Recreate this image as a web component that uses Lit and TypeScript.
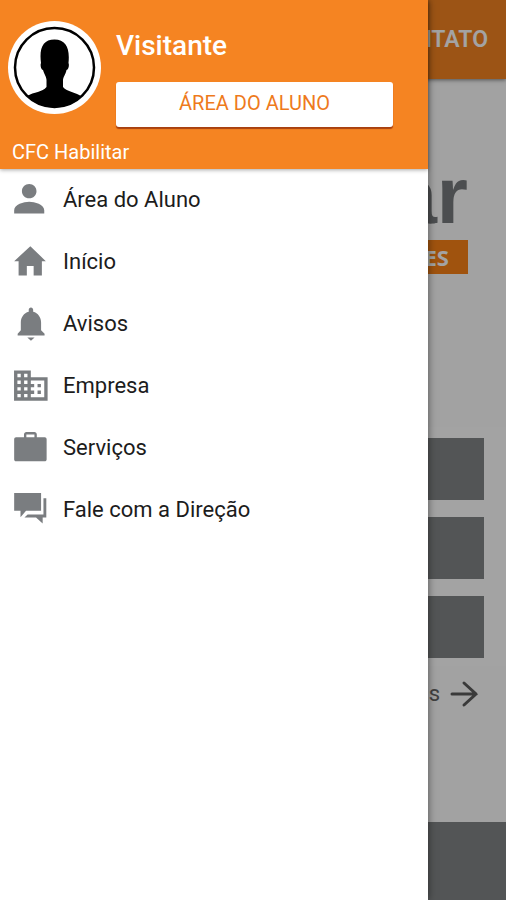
import { LitElement, html, css, svg } from "lit";
import { customElement } from "lit/decorators.js";

const ICONS = {
  person: svg`<path d="M11.500 10.900c2.600 0 4.600-2 4.600-4.500s-2-4.500-4.600-4.500-4.600 2-4.600 4.500 2 4.500 4.600 4.500zm0 2.200c-3.400 0-9.500 1.700-9.500 5.400v2h19v-2c0-3.700-6.100-5.400-9.500-5.400z"/>`,
  home: svg`<path d="M10 20.500v-6h4.300v6h5.200v-9H22L12.200 2 2 11.500h2.800v9z"/>`,
  bell: svg`<path d="M10.300 20.500h4.600l-2.300 2zM19 16v-5c0-3.070-1.900-6-5-6.700V3c0-.83-.6-1.500-1.400-1.500s-1.400.67-1.400 1.500v1.300c-3.100.7-5 3.600-5 6.700v5l-2 2.200v1.100h17v-1.100z"/>`,
  company: svg`<path transform="translate(-.2 -1) scale(1.060)" d="M12 7V3H2v18h20V7H12zM6 19H4v-2h2v2zm0-4H4v-2h2v2zm0-4H4V9h2v2zm0-4H4V5h2v2zm4 12H8v-2h2v2zm0-4H8v-2h2v2zm0-4H8V9h2v2zm0-4H8V5h2v2zm10 12h-8v-2h2v-2h-2v-2h2v-2h-2V9h8v10zm-2-8h-2v2h2v-2zm0 4h-2v2h2v-2z"/>`,
  briefcase: svg`<path d="M21.300 5.200h-5V3.500c0-1-.7-1.600-1.500-1.600H9.700c-.8 0-1.500.6-1.500 1.600v1.700H3.200c-.7 0-1.200.5-1.200 1.200v12.800c0 .7.500 1.200 1.200 1.200h18.100c.7 0 1.200-.5 1.200-1.200V6.400c0-.7-.5-1.200-1.200-1.200zm-6.500 0H9.700V3.400h5.100z"/>`,
  chat: svg`<path d="M2 1.200h17v11.300H9.500L6 16.500v-4H2zM20.500 4.500h1.800v12.300H20v3.700l-4.200-3.700H8.500l2-2h10z"/>`,
};

const MENU = [
  { icon: ICONS.person, label: "Área do Aluno" },
  { icon: ICONS.home, label: "Início" },
  { icon: ICONS.bell, label: "Avisos" },
  { icon: ICONS.company, label: "Empresa" },
  { icon: ICONS.briefcase, label: "Serviços" },
  { icon: ICONS.chat, label: "Fale com a Direção" },
];

@customElement("side-drawer")
class SideDrawer extends LitElement {
  static styles = css`
    :host {
      display: block;
      background: #fff;
      box-shadow: 0 0 8px rgba(0, 0, 0, 0.5);
    }
    .head {
      background: #f58422;
      color: #fff;
      padding: 21px 8px 0;
      box-shadow: 0 1px 4px rgba(0, 0, 0, 0.35);
    }
    .profile {
      display: flex;
      gap: 15px;
    }
    .avatar {
      flex: none;
      width: 93px;
      height: 93px;
    }
    .who {
      flex: 1;
      display: flex;
      flex-direction: column;
      justify-content: space-between;
      height: 106px;
      padding-right: 27px;
    }
    .name {
      margin: 0;
      padding-top: 8px;
      font-size: 28px;
      line-height: 34px;
      font-weight: 500;
    }
    .area {
      height: 45px;
      padding-bottom: 4px;
      border: 0;
      border-radius: 3px;
      background: #fff;
      color: #ee7a1c;
      font: 400 20px/24px Roboto, sans-serif;
      box-shadow: 0 2px 1px #a8400f;
    }
    .unit {
      margin: 0;
      padding: 10px 4px 2px;
      font-size: 20px;
      line-height: 30px;
    }
    ul {
      list-style: none;
      margin: 0;
      padding: 0;
    }
    a {
      display: flex;
      align-items: center;
      gap: 14px;
      height: 62px;
      padding: 0 11px;
      color: #1c1c1c;
      text-decoration: none;
      font-size: 22px;
      line-height: 28px;
    }
    a svg {
      width: 38px;
      height: 38px;
      fill: #7a7d80;
    }
  `;

  render() {
    return html`
      <header class="head">
        <div class="profile">
          <svg class="avatar" viewBox="0 0 93 93" role="img" aria-label="Visitante">
            <defs><clipPath id="disc"><circle cx="46.500" cy="46.500" r="40" /></clipPath></defs>
            <circle cx="46.500" cy="46.500" r="46.500" fill="#fff" />
            <path
              clip-path="url(#disc)"
              d="M38.500 59c0-3-2-5-3.500-10-2 0-3-5-2-7-2-15 2-23.500 13.500-23.500S62 27 60.500 42c1 2 0 7-2 7-1 5-3.500 7-3.500 10v7c4 5 13 5 19 10v20H19V75c7-4 15.500-4 19.500-9z"
            />
            <circle cx="46.500" cy="46.500" r="39.500" fill="none" stroke="#000" stroke-width="2.500" />
          </svg>
          <div class="who">
            <h1 class="name">Visitante</h1>
            <button class="area" type="button">ÁREA DO ALUNO</button>
          </div>
        </div>
        <p class="unit">CFC Habilitar</p>
      </header>
      <nav>
        <ul>
          ${MENU.map(
            (m) => html`<li>
              <a href="#"><svg viewBox="0 0 24 24" aria-hidden="true">${m.icon}</svg>${m.label}</a>
            </li>`
          )}
        </ul>
      </nav>
    `;
  }
}

@customElement("app-root")
class AppRoot extends LitElement {
  static styles = css`
    :host {
      display: block;
      position: relative;
      overflow: hidden;
      font-family: Roboto, sans-serif;
    }
    .page {
      min-height: 100vh;
      display: flex;
      flex-direction: column;
      background: #fdfdfd;
      text-align: right;
    }
    .bar {
      height: 79px;
      padding: 0 18px;
      background: #f58422;
      color: #fff;
      font-size: 23px;
      line-height: 79px;
      font-weight: 600;
      box-shadow: 0 1px 4px rgba(0, 0, 0, 0.5);
    }
    .logo {
      display: flex;
      flex-direction: column;
      align-items: flex-end;
      height: 265px;
      padding: 83px 38px 0;
    }
    .brand {
      height: 78px;
      color: #777b7d;
      font: 700 80px/68px "Liberation Sans", sans-serif;
    }
    .tag {
      box-sizing: border-box;
      height: 34px;
      padding: 0 19px;
      background: #fb8216;
      color: #fff;
      font: 700 22px/34px "Noto Sans", sans-serif;
    }
    .cards {
      display: flex;
      flex-direction: column;
      gap: 17px;
      padding: 11px 22px 8px;
      background: #fff;
    }
    .card {
      height: 62px;
      border: 0;
      background: #828587;
    }
    .more {
      display: flex;
      justify-content: flex-end;
      align-items: center;
      gap: 10px;
      padding: 8px 26px;
      color: #666;
      font-size: 22px;
      line-height: 40px;
      text-decoration: none;
    }
    .more svg {
      width: 30px;
      height: 30px;
      fill: none;
      stroke: #5c5c5c;
      stroke-width: 3;
      stroke-linecap: round;
    }
    .foot {
      height: 78px;
      margin-top: auto;
      background: #828587;
    }
    .scrim {
      position: absolute;
      inset: 0;
      background: rgba(0, 0, 0, 0.36);
    }
    .drawer {
      position: absolute;
      inset: 0 78px 0 0;
    }
  `;

  render() {
    return html`
      <main class="page">
        <header class="bar">CONTATO</header>
        <section class="logo">
          <span class="brand">ar</span>
          <span class="tag">ES</span>
        </section>
        <section class="cards">
          <button class="card" type="button" aria-label="1"></button>
          <button class="card" type="button" aria-label="2"></button>
          <button class="card" type="button" aria-label="3"></button>
        </section>
        <a class="more" href="#">
          <span>s</span>
          <svg viewBox="0 0 30 30" aria-hidden="true"><path d="M2 15H26M14 4L26 15L14 26" /></svg>
        </a>
        <footer class="foot"></footer>
      </main>
      <div class="scrim"></div>
      <side-drawer class="drawer"></side-drawer>
    `;
  }
}
